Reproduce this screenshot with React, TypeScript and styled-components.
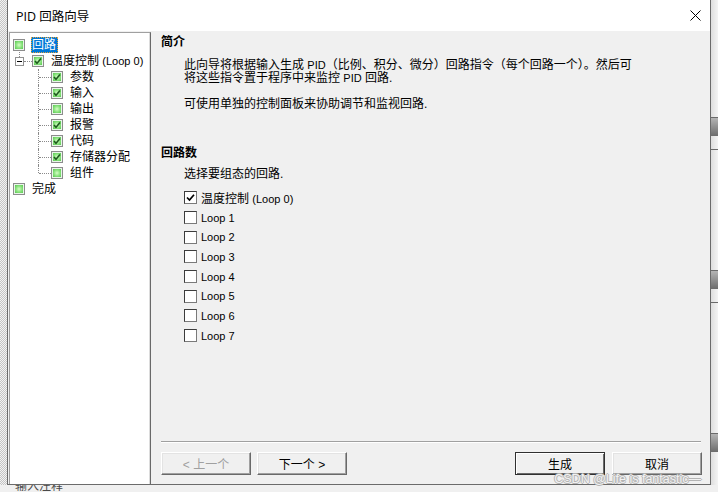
import React from 'react';
import styled, { createGlobalStyle } from 'styled-components';

const colors = {
  face: '#f0f0f0',
  frame: '#6b6b6b',
  shadow: '#a0a0a0',
  darkShadow: '#696969',
  text: '#000000',
  disabled: '#a0a0a0',
  select: '#0078d7',
};

const GlobalStyle = createGlobalStyle`
  html, body {
    margin: 0;
    padding: 0;
    background: ${colors.face};
  }
  body {
    font-family: "Liberation Sans", "Noto Sans CJK SC", sans-serif;
    font-size: 12px;
    color: ${colors.text};
  }
`;

const Desktop = styled.div`
  position: relative;
  width: 718px;
  height: 492px;
  display: flex;
  flex-direction: column;
  overflow: hidden;
  background: ${colors.face};
`;

const TopRow = styled.div`
  display: flex;
  height: 485px;
`;

const LeftStrip = styled.div`
  width: 7px;
  flex-shrink: 0;
  background-color: #e6e6e6;
  background-image: repeating-conic-gradient(#c4c4c4 0% 25%, #f2f2f2 0% 50%);
  background-size: 2px 2px;
`;

const RightStrip = styled.div`
  width: 7px;
  flex-shrink: 0;
  display: flex;
  flex-direction: column;
  background: linear-gradient(90deg, #dedede, #f4f4f4);
`;

const StripGap = styled.div<{ $h: number }>`
  height: ${p => p.$h}px;
  flex-shrink: 0;
`;

const StripKnob = styled.div`
  height: 18px;
  flex-shrink: 0;
  border-top: 1px solid #6a6a6a;
  background: linear-gradient(180deg, #b4b4b4, #6c6c6c);
`;

const StripLine = styled.div`
  height: 1px;
  flex-shrink: 0;
  background: #6a6a6a;
`;

const BottomStrip = styled.div`
  height: 7px;
  overflow: hidden;
  padding-left: 15px;
  background: #f0f0f0;
`;

const BehindText = styled.div`
  margin-top: -5px;
  line-height: 13px;
  font-size: 12px;
  color: #4a4a4a;
`;

const Dialog = styled.div`
  width: 704px;
  box-sizing: border-box;
  flex-shrink: 0;
  display: flex;
  flex-direction: column;
  border: 1px solid ${colors.frame};
  border-top: none;
  background: ${colors.face};
`;

const TitleBar = styled.div`
  height: 31px;
  flex-shrink: 0;
  display: flex;
  align-items: center;
  justify-content: space-between;
  padding: 0 9px 0 8px;
  background: #ffffff;
`;

const Title = styled.span`
  font-family: "Open Sans", "Noto Sans CJK SC", sans-serif;
  font-size: 12.5px;
  padding-bottom: 1px;
`;

const CloseIcon = styled.svg`
  width: 11px;
  height: 11px;
  margin-bottom: 1px;
`;

const Body = styled.div`
  flex: 1;
  display: flex;
  padding: 1px 0 0 1px;
  min-height: 0;
`;

const TreePanel = styled.div`
  width: 142px;
  box-sizing: border-box;
  flex-shrink: 0;
  padding: 4px 0 0 0;
  background: #ffffff;
  border-top: 1px solid ${colors.shadow};
  border-left: 1px solid ${colors.shadow};
  border-right: 1px solid ${colors.darkShadow};
  box-shadow: inset -1px 0 0 #dcdcdc;
`;

const TreeRow = styled.div<{ $indent: number }>`
  height: 16px;
  display: flex;
  align-items: center;
  padding-left: ${p => p.$indent}px;
  white-space: nowrap;
`;

const Expander = styled.span`
  position: relative;
  width: 9px;
  height: 9px;
  box-sizing: border-box;
  border: 1px solid #919191;
  background: #fff;
  flex-shrink: 0;

  &::before {
    content: '';
    position: absolute;
    left: 3px;
    top: -6px;
    height: 5px;
    border-left: 1px dotted #8a8a8a;
  }

  &::after {
    content: '';
    position: absolute;
    left: 1px;
    top: 3px;
    width: 5px;
    height: 1px;
    background: #000;
  }
`;

const HConnector = styled.span<{ $w: number }>`
  width: ${p => p.$w}px;
  flex-shrink: 0;
  border-top: 1px dotted #8a8a8a;
`;

const Elbow = styled.span<{ $last?: boolean }>`
  position: relative;
  width: 13px;
  height: 16px;
  flex-shrink: 0;

  &::before {
    content: '';
    position: absolute;
    left: 0;
    top: 0;
    height: ${p => (p.$last ? '8px' : '16px')};
    border-left: 1px dotted #8a8a8a;
  }

  &::after {
    content: '';
    position: absolute;
    left: 1px;
    top: 8px;
    width: 12px;
    border-top: 1px dotted #8a8a8a;
  }
`;

const TreeIcon = styled.span`
  width: 12px;
  height: 12px;
  box-sizing: border-box;
  flex-shrink: 0;
  display: flex;
  align-items: center;
  justify-content: center;
  border: 1px solid #8c8c8c;
  background: radial-gradient(circle at 50% 50%, #d4ffc4 0%, #86e07a 45%, #3fb83a 100%);
  box-shadow: inset 0 0 0 1px #eaf6ea;
`;

const TreeLabel = styled.span<{ $selected?: boolean }>`
  height: 16px;
  box-sizing: border-box;
  display: flex;
  align-items: center;
  margin-left: 6px;
  padding: 0 1px 0 0;
  border: 1px ${p => (p.$selected ? 'dotted #e5a23c' : 'solid transparent')};
  background: ${p => (p.$selected ? colors.select : 'transparent')};
  color: ${p => (p.$selected ? '#ffffff' : colors.text)};
  line-height: 14px;
`;

/* Latin runs are set a little smaller, like Tahoma beside SimSun */
const Latin = styled.span`
  font-size: 11px;
`;

const Content = styled.div`
  flex: 1;
  display: flex;
  flex-direction: column;
  padding: 2px 8px 9px 10px;
  min-width: 0;
`;

const SectionTitle = styled.div<{ $gap: number }>`
  margin-top: ${p => p.$gap}px;
  font-weight: bold;
  line-height: 16px;
`;

const Paragraph = styled.p<{ $gap: number }>`
  margin: ${p => p.$gap}px 0 0 23px;
  line-height: 13px;
  white-space: nowrap;
`;

const LoopList = styled.div`
  margin: 7px 0 0 23px;
  display: flex;
  flex-direction: column;
`;

const LoopRow = styled.label`
  height: 19.7px;
  display: flex;
  align-items: center;
  gap: 4px;
`;

const CheckBox = styled.span`
  width: 13px;
  height: 13px;
  box-sizing: border-box;
  display: flex;
  align-items: center;
  justify-content: center;
  background: #ffffff;
  border: 1px solid #7a7a7a;
  border-top-color: #3c3c3c;
  border-left-color: #3c3c3c;
`;

const Spacer = styled.div`
  flex: 1;
`;

const Separator = styled.div`
  height: 1px;
  margin-right: 1px;
  background: ${colors.shadow};
  border-bottom: 1px solid #ffffff;
`;

const ButtonRow = styled.div`
  margin-top: 9px;
  display: flex;
  align-items: center;
`;

const ButtonGroup = styled.div<{ $gap: number }>`
  display: flex;
  gap: ${p => p.$gap}px;
`;

const Button = styled.button<{ $default?: boolean }>`
  width: 90px;
  height: 23px;
  box-sizing: border-box;
  padding: 0;
  font-family: "Liberation Sans", "Noto Sans CJK SC", sans-serif;
  font-size: 12px;
  color: ${colors.text};
  background: ${colors.face};
  border: 1px solid;
  border-color: ${p => (p.$default ? '#303030' : '#ffffff #696969 #696969 #ffffff')};
  box-shadow: ${p =>
    p.$default
      ? 'inset 1px 1px 0 #ffffff, inset -1px -1px 0 #696969'
      : 'inset -1px -1px 0 #a0a0a0, inset 1px 1px 0 #e3e3e3'};

  &:disabled {
    color: ${colors.disabled};
  }
`;

const PushRight = styled.div`
  flex: 1;
`;

const Watermark = styled.div`
  position: absolute;
  right: 17px;
  bottom: 6px;
  font-family: "Liberation Sans", sans-serif;
  font-size: 12.5px;
  color: #f2f2f2;
  text-shadow: 1px 0 0 #b4b4b4, -1px 0 0 #b4b4b4, 0 1px 0 #b4b4b4, 0 -1px 0 #b4b4b4;
  pointer-events: none;
`;

const TreeCheck = () => (
  <svg width="8" height="8" viewBox="0 0 8 8">
    <path d="M1 4 L3 6.2 L7 1.6" fill="none" stroke="#1d5a1d" strokeWidth="1.6" />
  </svg>
);

const BoxCheck = () => (
  <svg width="9" height="9" viewBox="0 0 9 9">
    <path d="M1 4.5 L3.5 7 L8 1.8" fill="none" stroke="#000" strokeWidth="1.7" />
  </svg>
);

const subItems = [
  { label: '参数', checked: true },
  { label: '输入', checked: true },
  { label: '输出', checked: false },
  { label: '报警', checked: true },
  { label: '代码', checked: true },
  { label: '存储器分配', checked: true },
  { label: '组件', checked: false },
];

const loops = [
  { cjk: '温度控制 ', latin: '(Loop 0)', checked: true },
  { cjk: '', latin: 'Loop 1', checked: false },
  { cjk: '', latin: 'Loop 2', checked: false },
  { cjk: '', latin: 'Loop 3', checked: false },
  { cjk: '', latin: 'Loop 4', checked: false },
  { cjk: '', latin: 'Loop 5', checked: false },
  { cjk: '', latin: 'Loop 6', checked: false },
  { cjk: '', latin: 'Loop 7', checked: false },
];

const App: React.FC = () => {
  return (
    <>
      <GlobalStyle />
      <Desktop>
        <TopRow>
          <LeftStrip />
          <Dialog>
            <TitleBar>
              <Title>PID 回路向导</Title>
              <CloseIcon viewBox="0 0 11 11">
                <path d="M0.5 0.5 L10.5 10.5 M10.5 0.5 L0.5 10.5" stroke="#000" strokeWidth="1" />
              </CloseIcon>
            </TitleBar>
            <Body>
              <TreePanel>
                <TreeRow $indent={3}>
                  <TreeIcon />
                  <TreeLabel $selected>回路</TreeLabel>
                </TreeRow>
                <TreeRow $indent={5}>
                  <Expander />
                  <HConnector $w={8} />
                  <TreeIcon>
                    <TreeCheck />
                  </TreeIcon>
                  <TreeLabel>
                    温度控制&nbsp;<Latin>(Loop 0)</Latin>
                  </TreeLabel>
                </TreeRow>
                {subItems.map((item, i) => (
                  <TreeRow key={item.label} $indent={28}>
                    <Elbow $last={i === subItems.length - 1} />
                    <TreeIcon>{item.checked && <TreeCheck />}</TreeIcon>
                    <TreeLabel>{item.label}</TreeLabel>
                  </TreeRow>
                ))}
                <TreeRow $indent={3}>
                  <TreeIcon />
                  <TreeLabel>完成</TreeLabel>
                </TreeRow>
              </TreePanel>

              <Content>
                <SectionTitle $gap={0}>简介</SectionTitle>
                <Paragraph $gap={9}>
                  此向导将根据输入生成 <Latin>PID</Latin>（比例、积分、微分）回路指令（每个回路一个）。然后可
                  <br />
                  将这些指令置于程序中来监控 <Latin>PID</Latin> 回路.
                </Paragraph>
                <Paragraph $gap={13}>可使用单独的控制面板来协助调节和监视回路.</Paragraph>

                <SectionTitle $gap={34}>回路数</SectionTitle>
                <Paragraph $gap={7}>选择要组态的回路.</Paragraph>
                <LoopList>
                  {loops.map(loop => (
                    <LoopRow key={loop.latin}>
                      <CheckBox>{loop.checked && <BoxCheck />}</CheckBox>
                      <span>
                        {loop.cjk}
                        <Latin>{loop.latin}</Latin>
                      </span>
                    </LoopRow>
                  ))}
                </LoopList>

                <Spacer />
                <Separator />
                <ButtonRow>
                  <ButtonGroup $gap={6}>
                    <Button disabled>&lt; 上一个</Button>
                    <Button>下一个 &gt;</Button>
                  </ButtonGroup>
                  <PushRight />
                  <ButtonGroup $gap={7}>
                    <Button $default>生成</Button>
                    <Button>取消</Button>
                  </ButtonGroup>
                </ButtonRow>
              </Content>
            </Body>
          </Dialog>
          <RightStrip>
            <StripGap $h={117} />
            <StripKnob />
            <StripGap $h={13} />
            <StripLine />
            <StripGap $h={120} />
            <StripKnob />
            <StripGap $h={13} />
            <StripLine />
            <StripGap $h={130} />
            <StripKnob />
          </RightStrip>
        </TopRow>
        <BottomStrip>
          <BehindText>输入注释</BehindText>
        </BottomStrip>
        <Watermark>CSDN @Life is fantastic—</Watermark>
      </Desktop>
    </>
  );
};

export default App;
